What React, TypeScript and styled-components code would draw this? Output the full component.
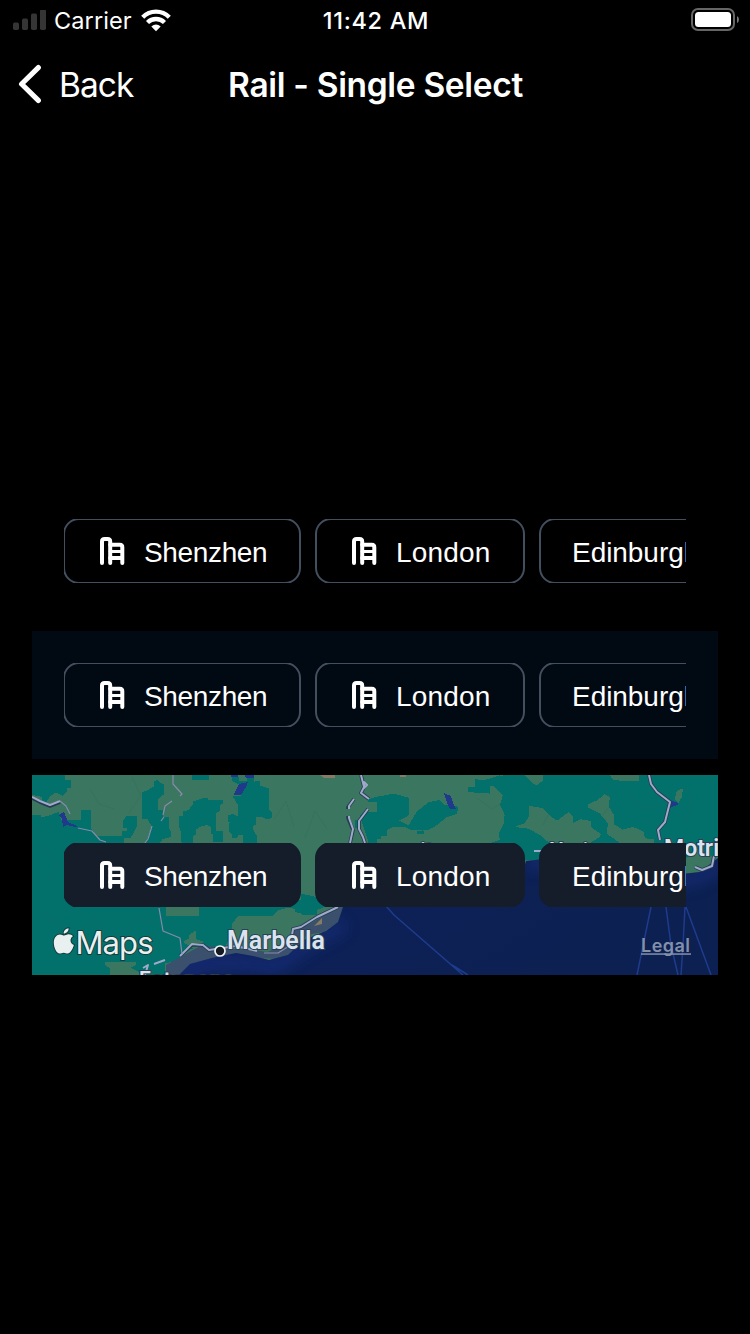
import React from "react";
import styled, { createGlobalStyle, css } from "styled-components";

const GlobalStyle = createGlobalStyle`
  *, *::before, *::after { box-sizing: border-box; }
  body { margin: 0; background: #000; }
`;

const Screen = styled.main`
  display: flex;
  flex-direction: column;
  width: 750px;
  height: 1334px;
  overflow: hidden;
  background: #000;
  color: #fff;
  font-family: Inter, "Liberation Sans", sans-serif;
`;

const StatusBar = styled.header`
  display: grid;
  grid-template-columns: 1fr auto 1fr;
  align-items: center;
  height: 40px;
  padding: 0 11px 2px 13px;
  font-size: 23.5px;
  line-height: 38px;
`;

const StatusSide = styled.div<{ $end?: boolean }>`
  display: flex;
  align-items: center;
  justify-content: ${(p) => (p.$end ? "flex-end" : "flex-start")};
  height: 38px;
`;

const Carrier = styled.span`
  margin: 0 9px 0 8px;
  padding-top: 2px;
  letter-spacing: 0.1px;
`;

const Clock = styled.time`
  padding-top: 2px;
  font-weight: 500;
  font-size: 23.5px;
  letter-spacing: 0.7px;
`;

const NavBar = styled.nav`
  display: grid;
  grid-template-columns: 1fr auto 1fr;
  align-items: center;
  height: 88px;
  padding: 0 18px;
`;

const BackButton = styled.button`
  display: flex;
  align-items: center;
  gap: 15px;
  justify-self: start;
  padding: 0;
  border: 0;
  background: none;
  color: #fff;
  font-family: inherit;
  font-size: 33.5px;
  letter-spacing: -0.95px;
`;

const BackLabel = styled.span`
  padding: 1px 0 0 1px;
`;

const Title = styled.h1`
  margin: 0;
  padding: 1px 0 0 1px;
  font-size: 33.5px;
  font-weight: 600;
  letter-spacing: -0.33px;
`;

const Content = styled.section`
  display: flex;
  flex-direction: column;
  gap: 16px;
  margin-top: 359px;
  padding: 0 32px;
`;

const Panel = styled.div<{ $variant: "plain" | "tinted" | "map" }>`
  position: relative;
  flex: none;
  height: ${(p) => (p.$variant === "map" ? 200 : 128)}px;
  padding: ${(p) => (p.$variant === "map" ? "68px 32px" : "32px")};
  overflow: hidden;
  background: ${(p) => (p.$variant === "tinted" ? "#010913" : "transparent")};
`;

const Rail = styled.div`
  position: relative;
  height: 64px;
  overflow: hidden;
`;

const Track = styled.div`
  display: flex;
  gap: 14px;
  width: max-content;
  margin: -1px 0 0 -1px;
`;

const Chip = styled.button<{ $width: number; $filled?: boolean }>`
  display: flex;
  align-items: center;
  gap: 18px;
  flex: none;
  width: ${(p) => p.$width}px;
  height: 66px;
  padding: 0 0 0 30px;
  border: 2px solid #434e5e;
  border-radius: 16px;
  background: transparent;
  color: #fff;
  font: 28px/32px "Liberation Sans", Arial, sans-serif;
  white-space: nowrap;
  ${(p) =>
    p.$filled &&
    css`
      border-color: #151d2b;
      background: #151d2b;
    `}
`;

const ChipIcon = styled.svg`
  flex: none;
  margin: 0 1px 0 5px;
`;

const ChipLabel = styled.span<{ $tracking: number; $inset: number }>`
  padding: 4px 0 0 ${(p) => p.$inset}px;
  letter-spacing: ${(p) => p.$tracking}px;
`;

const MapCanvas = styled.svg`
  position: absolute;
  inset: 0;
`;

const cities = [
  { name: "Shenzhen", width: 238, icon: true, tracking: -0.35 },
  { name: "London", width: 210, icon: true, tracking: 0.2 },
  { name: "Edinburgh", width: 200, icon: false, tracking: -0.05 },
];

function BuildingIcon() {
  return (
    <ChipIcon width="25" height="28" viewBox="0 0 25 28" fill="none" stroke="#fff" strokeWidth="4" strokeLinecap="round" strokeLinejoin="round">
      <path d="M2 26V4.6Q2 2 4.6 2H7.6Q10.2 2 10.2 4.6V26" />
      <path d="M10.2 7.7H19.8Q22.3 7.7 22.3 10.2V26" />
      <path d="M10.2 14.4H22" strokeWidth="3" />
      <path d="M10.2 21H22" />
    </ChipIcon>
  );
}

function CityRail({ filled }: { filled?: boolean }) {
  return (
    <Rail>
      <Track>
        {cities.map((city) => (
          <Chip key={city.name} $width={city.width} $filled={filled}>
            {city.icon && <BuildingIcon />}
            <ChipLabel $tracking={city.tracking} $inset={city.icon ? 0 : 1}>
              {city.name}
            </ChipLabel>
          </Chip>
        ))}
      </Track>
    </Rail>
  );
}

function SignalIcon() {
  return (
    <svg width="33" height="21" viewBox="0 0 33 21" fill="#353535">
      <rect x="0" y="12.5" width="6" height="7.5" rx="1.7" />
      <rect x="9" y="8.5" width="6" height="11.5" rx="1.7" />
      <rect x="18" y="3.5" width="6" height="16.5" rx="1.7" />
      <rect x="27" y="-0.5" width="6" height="20.5" rx="1.7" />
    </svg>
  );
}

function WifiIcon() {
  return (
    <svg width="30" height="23" viewBox="0 0 30 23" fill="none" stroke="#fff" strokeWidth="4.3">
      <path d="M1.7 8.3Q7.2 2.6 15 2.6T28.3 8.3" />
      <path d="M6.5 13.5Q10 10 15 10T23.5 13.5" />
      <path d="M10.3 17.5Q15 13.4 19.7 17.5L15 22.3Z" fill="#fff" stroke="none" />
    </svg>
  );
}

function BatteryIcon() {
  return (
    <svg width="48" height="24" viewBox="0 0 48 24">
      <rect x="1" y="1" width="42" height="21" rx="6" fill="none" stroke="#666" strokeWidth="2" />
      <rect x="4" y="4" width="36" height="15" rx="3.5" fill="#fff" />
      <path d="M46 8q2 1.2 2 3.5t-2 3.5z" fill="#777" />
    </svg>
  );
}

function CoastMap() {
  return (
    <MapCanvas width="686" height="200" viewBox="0 0 686 200">
      <defs>
        <linearGradient id="sea" x1="0" y1="0" x2="1" y2="0.35">
          <stop offset="0" stopColor="#18286b" />
          <stop offset="0.4" stopColor="#0d2158" />
          <stop offset="1" stopColor="#0c2051" />
        </linearGradient>
        <filter id="shore" x="-10%" y="-30%" width="120%" height="160%">
          <feGaussianBlur stdDeviation="7" />
        </filter>
        <clipPath id="seaClip">
          <path d="M147 200L158 189L180 183L204 178L221 181L237 185L256 180L272 165L294 156L306 147L311 132H480L494 86L512 84L542 89L650 99L668 97L686 83V200Z" />
        </clipPath>
      </defs>

      <rect width="686" height="200" fill="#3b7660" />

      <g fill="#02706b" transform="scale(0.33333)" shapeRendering="crispEdges">
        <path d="M0 0H100V14H118V38H106V50L92 62L72 52L56 62L44 80L30 82V66L0 60Z" />
        <path d="M0 120H28V127L50 122L80 110L88 136H146V106H176V158L194 182L220 183V200L240 206V420H0Z" />
        <path d="M220 182H270V168H286V158H274V136L282 124H314V154L304 176L294 190H276V210H220Z" />
        <path d="M330 52L346 46L366 34V18L378 15L384 24L396 28V58L378 72V106H392V126H410V160L418 170V186L392 192L380 210H340L358 152L346 132H330Z" />
        <path d="M442 122H452V110L468 106L482 90V80L512 70H528V76L572 74V86L564 90V108L552 114V168H572V200H544V176H536V156L526 150L508 154L492 164V178L482 184V210H452L446 196V168L442 158Z" />
        <path d="M480 0H530V14H480ZM600 6H622V18H646V6H666V20L684 18V32L712 40V104L720 112V130L700 132L690 126H672V148L664 152V164L676 186V208H632V180H620L614 190H600V180L590 166V148L594 142H588V122L602 116L618 124V90L602 64H626V32L600 18Z" />
      </g>

      <g fill="#02706b" transform="translate(218 -10) scale(0.33333)" shapeRendering="crispEdges">
        <path d="M355 103L382 95L432 86L476 98L478 150L447 167L476 181L500 140L535 112L568 105L583 120L625 125L621 146L590 157L560 181L537 194H480L466 186H430L410 196V212H392V222H380V234H356L330 153L340 140H380V110H355ZM500 198L520 196L522 206H500ZM316 165H330V190H316Z" />
        <path d="M655 65H675V42L700 46L725 39L750 30V98L712 83L688 85L655 80Z" />
        <path d="M152 386L200 396V450H152Z" />
      </g>

      <g transform="translate(458 -10) scale(0.33333)" shapeRendering="crispEdges">
        <path fill="#02706b" d="M0 40L46 30H684V290L590 320L540 285H100L0 234V198L30 200L44 150L30 120L38 95L0 64Z" />
        <g fill="#3b7660">
          <path d="M0 64L10 62L38 92L30 118L44 150L40 180L26 205L30 225L0 234Z" />
          <path d="M105 30H160V46L138 62L118 46ZM358 30H447V47L402 49L370 44ZM73 186L105 174L116 156V122L160 130L182 155L201 167L235 142L250 155V174L272 163L304 168V187L332 207L330 216L300 234H178L150 210L115 191ZM293 119L321 106L344 88L360 96L356 124L372 150V178L398 194L430 186L461 200L465 220L492 222V234H390L350 206L354 175L330 146L295 128Z" />
          <path d="M554 102L560 78L579 70L575 97L565 115Z" />
        </g>
        <path fill="#3b7660" d="M620 250L650 270L684 275V285L660 315L620 325L585 332V285Z" />
      </g>

      <g transform="translate(0 125) scale(0.33333)" shapeRendering="crispEdges">
        <path fill="#02706b" d="M0 0H880V20L830 40H790V26L765 24L740 30L720 48H620L600 70V100L580 140L540 150L500 140L470 150L440 180L400 190V225H0Z" />
        <path fill="#3b7660" d="M402 20H500V48H402ZM452 126L470 116V108L486 94H492V118L512 124L530 150L500 158L476 140ZM600 70L622 48H730L740 34L770 24L790 36L812 44V50H850L862 60L840 78L800 94L780 112L770 150L740 176L680 172L600 150ZM220 186H312V194L296 204L320 215V225H234V206L220 194Z" />
      </g>

      <path fill="#3b506c" d="M134 200V190L150 181L170 170L195 174H218L235 177L262 166L262 155L276 150L306 132H314L306 147L292 157L274 160L266 178L245 184L210 182L180 187L160 200Z" />
      <path fill="url(#sea)" d="M147 200L158 189L180 183L204 178L221 181L237 185L256 180L272 165L294 156L306 147L311 132H480L494 86L512 84L542 89L650 99L668 97L686 83V200Z" />
      <g clipPath="url(#seaClip)">
        <path d="M145 204L172 188L215 188L242 192L276 169L312 149M494 86L520 88L600 99L660 105L690 90" fill="none" stroke="#1d348b" strokeWidth="14" opacity="0.5" filter="url(#shore)" />
      </g>

      <g fill="#20398a" shapeRendering="crispEdges">
        <path d="M27 40L32 37L36 47L43 50L48 53L35 50L31 52L30 44ZM202 19L207 9L216 7L214 12L209 20H202ZM199 0H206V2H199ZM213 0H222V3H214ZM412 18L419 21L421 28L424 34H418L415 28ZM637 25L644 27L647 29L638 33L634 37Z" />
      </g>
      <path fill="#867b65" d="M288 0H303V3H292ZM368 0H374V2H368ZM286 147L290 143V149L282 151Z" />

      <g fill="none" stroke="#2d675d" strokeWidth="1" opacity="0.3">
        <path d="M58 14L67 29L82 34M100 2L109 21L96 39M242 45L254 26L262 52M273 63L283 36L295 54M509 19L518 36L511 50M570 5L580 28L568 44M655 12L659 32L652 48M3 70L26 87L17 107M9 139L30 148L22 169M50 154L62 145L74 155M97 155L107 142L121 149M445 23L460 34L476 24M595 17L610 34L627 29" />
      </g>

      <g fill="none" strokeLinejoin="round">
        <g stroke="#253b51" strokeWidth="3.6">
          <path d="M0 23L8 27L18 31L28 27M329 0L332 12L329 18L337 24M322 24L316 32V34M316 41V43L321 55L318 68M336 34L327 46V54L331 62L333 68M617 0L619 9L625 17L638 27L633 47L626 55L628 65M148 181L160 170L171 170L177 175L204 171M260 162L261 154L269 152L285 142L306 132M663 92L670 95L680 91L682 81" />
        </g>
        <g stroke="#9fa9c9" strokeWidth="2">
          <path d="M0 22L8 26L18 30L28 26M329 0L332 12L329 18L337 24M332 12V7L335 10L331 14M322 24L317 31V34M317 41V43L321 54L318 68M336 34L327 46V54L331 62L333 68M617 0L619 9L625 17L638 27L633 47L626 55L628 65M148 181L160 169L171 170L177 175L204 171L225 176M260 160L261 154L269 152L285 142L306 132M663 92L670 95L680 91L682 81M502 76H512M122 189L133 185M111 193L116 190L113 200" />
        </g>
        <path stroke="#858baa" strokeWidth="1.2" d="M28 26L34 31L38 39M46 53L60 56L68 65L74 67M141 0V9L150 19L148 21M140 26L133 31L131 40M132 42L129 46M120 51L116 64L113 68M127 133L131 156L148 163L150 179M232 178H246L262 168" />
      </g>

      <g fill="none" stroke="#1e3b8d" strokeWidth="1.5">
        <path d="M354 131L362 140L431 200M420 190L436 200M619 132L605 200M634 132L639 170L646 200M653 132L651 170L649 200M654 132L679 200" />
      </g>

      <g fill="#dbe4ee" stroke="#2a4156" strokeWidth="2" paintOrder="stroke" fontFamily="Roboto, Inter, sans-serif" fontWeight="600">
        <text x="195" y="174" fontSize="25" textLength="98" lengthAdjust="spacingAndGlyphs">Marbella</text>
        <text x="107" y="210.5" fontSize="21" textLength="95">Estepona</text>
        <text x="632" y="81" fontSize="23">Motril</text>
        <text x="517" y="82" fontSize="21">Nerja</text>
        <text x="377" y="82" fontSize="21">ait</text>
        <text x="151" y="84" fontSize="21">i</text>
      </g>
      <circle cx="188" cy="176" r="5" fill="#151b25" stroke="#f2f4f7" strokeWidth="1.7" />

      <g fill="#e8f1f0" stroke="#183b3c" strokeWidth="2" paintOrder="stroke">
        <path transform="translate(0.6 0)" d="M40.3 161.2C38.8 162.1 37.9 163.6 37.9 165.4C37.9 167.6 39.3 169.2 41.3 170C40.4 173.4 37.8 178.6 35 178.6C33.6 178.6 32.8 177.7 31.1 177.7C29.3 177.7 28.5 178.6 27 178.6C24 178.6 21.2 172.8 21.2 167.5C21.2 162.5 24.2 159.4 27.3 159.4C29.2 159.4 30.4 160.6 31.5 160.6C32.6 160.6 34.1 159.3 36.1 159.3C37.8 159.3 39.4 160 40.3 161.2ZM31.1 158.6C30.8 156 33.3 153.5 36 153.3C36.3 155.9 33.8 158.6 31.1 158.6Z" />
        <text x="43.5" y="178.5" fontFamily="Inter, sans-serif" fontSize="31" textLength="78" lengthAdjust="spacing">Maps</text>
      </g>
      <g fill="#8490aa">
        <text x="609" y="177" fontFamily="Inter, sans-serif" fontWeight="600" fontSize="18" textLength="49">Legal</text>
        <rect x="609" y="178.3" width="50" height="1.5" />
      </g>
    </MapCanvas>
  );
}

export default function App() {
  return (
    <>
      <GlobalStyle />
      <Screen>
        <StatusBar>
          <StatusSide>
            <SignalIcon />
            <Carrier>Carrier</Carrier>
            <WifiIcon />
          </StatusSide>
          <Clock>11:42 AM</Clock>
          <StatusSide $end>
            <BatteryIcon />
          </StatusSide>
        </StatusBar>
        <NavBar>
          <BackButton>
            <svg width="25" height="40" viewBox="0 0 25 40" fill="none" stroke="#fff" strokeWidth="5.2" strokeLinecap="round" strokeLinejoin="round">
              <path d="M20.3 3.6L3.6 20L20.3 36.4" />
            </svg>
            <BackLabel>Back</BackLabel>
          </BackButton>
          <Title>Rail - Single Select</Title>
        </NavBar>
        <Content>
          <Panel $variant="plain">
            <CityRail />
          </Panel>
          <Panel $variant="tinted">
            <CityRail />
          </Panel>
          <Panel $variant="map">
            <CoastMap />
            <CityRail filled />
          </Panel>
        </Content>
      </Screen>
    </>
  );
}
